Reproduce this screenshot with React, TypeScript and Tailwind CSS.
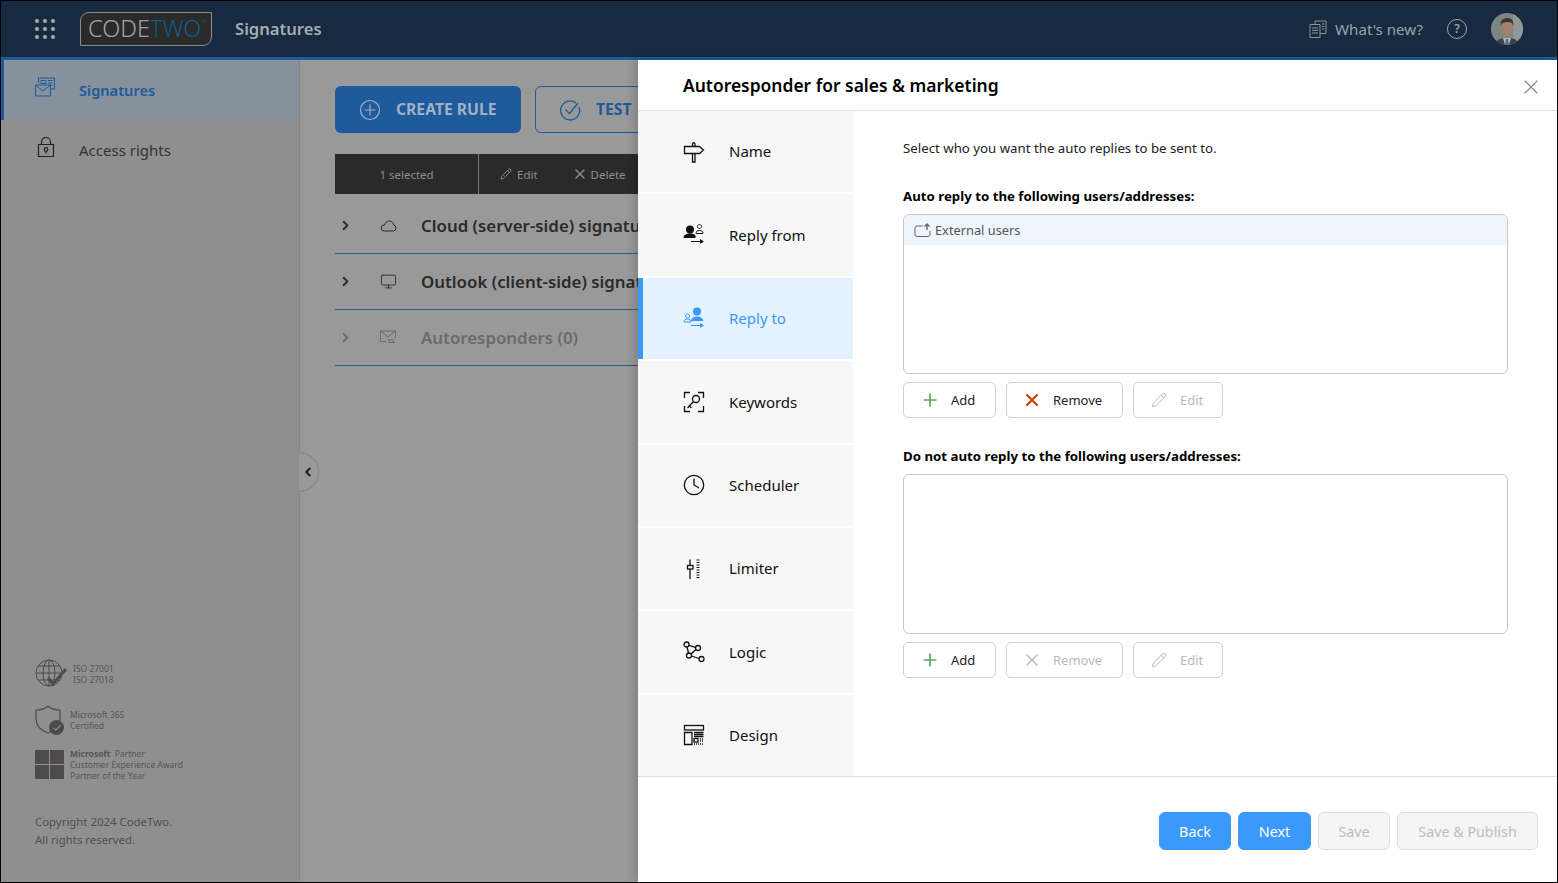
import { Check, ChevronLeft, ChevronRight, Monitor, Pencil, Plus, X } from "lucide-react";
import type { ReactNode } from "react";

const iconProps = { width: 24, height: 24, viewBox: "0 0 24 24", fill: "none", stroke: "currentColor", strokeWidth: 1.3 };

function SignIcon() {
  return (
    <svg {...iconProps}>
      <path d="M2.500 6.500h15l4 3.500-4 3.500h-15z M10.500 6.500V4a1.200 1.200 0 0 1 2.500 0v2.500 M10.500 13.500V22H13v-8.500" />
    </svg>
  );
}

function ReplyFromIcon() {
  return (
    <svg {...iconProps} stroke="none" fill="currentColor">
      <circle cx="8" cy="6.500" r="4" />
      <path d="M1.500 15c0-3 2.500-4.500 6.500-4.500 2.500 0 4.500.6 5.500 2V15z" />
      <path fill="none" stroke="currentColor" strokeWidth="1" d="M17.500 1.500a2 2 0 1 0 .01 0z M14 10.500c0-2 1-3 3.500-3s3.500 1 3.500 3z" />
      <path fill="none" stroke="currentColor" strokeWidth="1" d="M9 18.500h10" />
      <path d="M18 16l4 2.500-4 2.500z" />
    </svg>
  );
}

function ReplyToIcon() {
  return (
    <svg {...iconProps} stroke="none" fill="currentColor">
      <circle cx="15" cy="5.500" r="4" />
      <path d="M9 14.500c.6-2.700 3-4 6-4 3.500 0 6 1.500 6.500 4.500H9z" />
      <path fill="none" stroke="currentColor" strokeWidth="1" d="M5.500 8a2 2 0 1 0 .01 0z M2 16c0-2 1.200-3 3.500-3s3.500 1 3.500 3z" />
      <path fill="none" stroke="currentColor" strokeWidth="1" d="M9 19.500h10" />
      <path d="M18 17l4 2.500-4 2.500z" />
    </svg>
  );
}

function KeywordsIcon() {
  return (
    <svg {...iconProps}>
      <path d="M2.500 8V2.500H8 M16 2.500h5.500V8 M2.500 16v5.500H8 M16 21.500h5.500V16" />
      <circle cx="14" cy="9" r="3.500" />
      <path d="M11.500 11.500L5.500 18 M7.500 16l2 2" />
    </svg>
  );
}

function ClockIcon() {
  return (
    <svg {...iconProps}>
      <circle cx="12" cy="12" r="9.700" />
      <path d="M12 5.500V12l5 3" />
    </svg>
  );
}

function LimiterIcon() {
  return (
    <svg {...iconProps}>
      <path d="M8 2.500v6 M8 12v10" />
      <rect x="5.500" y="8.500" width="5.500" height="3.500" />
      <path d="M14.500 3h3 M14.500 5.500h3 M14.500 8h3 M14.500 10.500h3 M14.500 13h3 M14.500 15.500h3 M14.500 18h3 M14.500 20.500h3" strokeWidth="1" />
    </svg>
  );
}

function LogicIcon() {
  return (
    <svg {...iconProps}>
      <circle cx="4.500" cy="4.500" r="2.500" />
      <circle cx="16" cy="8" r="2.500" />
      <circle cx="7" cy="15.500" r="2.500" />
      <circle cx="19.500" cy="19" r="2.500" />
      <path d="M7 5.300l6.500 2 M5 7l1.500 6 M14 9.500l-5 4.500 M9.500 16l7.500 2.500" />
    </svg>
  );
}

function DesignIcon() {
  return (
    <svg {...iconProps}>
      <rect x="2.500" y="2.500" width="19" height="4.500" />
      <path d="M2.500 9.500h7.500v12H2.500z M12 9.500h9.500 M12 11.500h9.500 M12 13.500h9.500" />
      <rect x="12" y="15.500" width="4" height="3.500" />
      <path d="M18 16h3.500 M18 18h3.500 M12 21h9.500" strokeDasharray="1 1" />
    </svg>
  );
}

const steps: { name: string; icon: ReactNode; active?: boolean }[] = [
  { name: "Name", icon: <SignIcon /> },
  { name: "Reply from", icon: <ReplyFromIcon /> },
  { name: "Reply to", icon: <ReplyToIcon />, active: true },
  { name: "Keywords", icon: <KeywordsIcon /> },
  { name: "Scheduler", icon: <ClockIcon /> },
  { name: "Limiter", icon: <LimiterIcon /> },
  { name: "Logic", icon: <LogicIcon /> },
  { name: "Design", icon: <DesignIcon /> },
];

function GridDots() {
  return (
    <div className="grid grid-cols-3 gap-[4px]">
      {Array.from({ length: 9 }).map((_, i) => (
        <span key={i} className="size-[4px] rounded-full bg-[#a9adb1]" />
      ))}
    </div>
  );
}

function Avatar() {
  return (
    <svg width="32" height="32" viewBox="0 0 32 32">
      <clipPath id="avatar-clip">
        <circle cx="16" cy="16" r="16" />
      </clipPath>
      <g clipPath="url(#avatar-clip)">
        <rect width="32" height="32" fill="#7d8685" />
        <rect x="22" width="10" height="32" fill="#8f9a98" />
        <path d="M4 32c1-6 6-7 12-7s11 1 12 7z" fill="#3f4244" />
        <path d="M12 25h8l-2 7h-4z" fill="#b9b9b9" />
        <path d="M15 26h2l1 6h-4z" fill="#54688a" />
        <ellipse cx="16" cy="15" rx="6" ry="8" fill="#a07f6c" />
        <path d="M9.500 13c-.5-6 3-8 7-8s6.500 3 6 8c-1-3-2-4-6-4s-6 1-7 4z" fill="#43352c" />
      </g>
    </svg>
  );
}

function ToolButton({ label, icon, box, disabled }: { label: string; icon: ReactNode; box: string; disabled?: boolean }) {
  return (
    <button className={`flex h-9 items-center rounded-[5px] border border-[#d0d0d0] bg-white text-[13px] ${box} ${disabled ? "text-[#b9b9b9]" : "text-[#222]"}`}>
      {icon}
      <span className="mt-[2px]">{label}</span>
    </button>
  );
}

function ToolRow({ removable }: { removable?: boolean }) {
  return (
    <div className="mt-2 flex gap-[10px]">
      <ToolButton label="Add" box="w-[93px] gap-[11px] pl-[16px]" icon={<Plus size={20} strokeWidth={2} className="text-[#4caf50]" />} />
      <ToolButton
        label="Remove"
        box="w-[117px] gap-[11px] pl-[15px]"
        disabled={!removable}
        icon={<X size={20} strokeWidth={removable ? 2.500 : 1.800} className={removable ? "text-[#d83b01]" : "text-[#b9b9b9]"} />}
      />
      <ToolButton label="Edit" box="w-[90px] gap-[13px] pl-[17px]" disabled icon={<Pencil size={16} strokeWidth={1.500} className="text-[#b9b9b9]" />} />
    </div>
  );
}

function FooterButton({ label, width, primary }: { label: string; width: string; primary?: boolean }) {
  return (
    <button className={`h-[38px] rounded-[6px] border pt-px text-[14.300px] ${width} ${primary ? "border-[#3b99fc] bg-[#3b99fc] text-white" : "border-[#dedede] bg-[#f5f5f5] text-[#bdbdbd]"}`}>
      {label}
    </button>
  );
}

function ListRow({ label, icon, muted }: { label: string; icon: ReactNode; muted?: boolean }) {
  return (
    <div className={`flex h-14 items-center border-b border-[#2c5a8c] ${muted ? "text-[#6b6b6b]" : "text-[#2a2a2a]"}`}>
      <ChevronRight size={15} strokeWidth={3} className="ml-[3px] w-[15px]" />
      <span className="ml-[26px] flex w-[18px] justify-center">{icon}</span>
      <span className="ml-[24px] whitespace-nowrap text-[16.850px] font-semibold">{label}</span>
    </div>
  );
}

export default function App() {
  return (
    <div className="relative flex h-[883px] w-[1558px] flex-col overflow-hidden border border-black bg-[#999999] font-['Noto_Sans','Open_Sans',sans-serif]">
      <header className="box-content flex h-[56px] items-center border-b-[3px] border-[#1e5a9c] bg-[#172a40]">
        <div className="ml-[34px]">
          <GridDots />
        </div>
        <div className="relative ml-[25px] flex h-[34px] w-[132px] items-center rounded-tl-[9px] rounded-br-[9px] border border-[#8b8b8b] bg-[#2a2a2a] pl-[7px] text-[23.500px] leading-none font-light">
          <span className="text-[#a3a3a3]">CODE</span>
          <span className="text-[#0f5c86]">TWO</span>
          <span className="mb-[14px] text-[6px] text-[#555]">®</span>
        </div>
        <span className="ml-[23px] text-[16.600px] font-semibold text-[#a5adb5]">Signatures</span>
        <div className="ml-auto flex items-center">
          <svg width="18" height="18" viewBox="0 0 18 18" fill="none" stroke="#8c9299" strokeWidth="1">
            <path d="M1 4.500h10v13H1z M6 4.500V1h11v12.500h-6 M3 8h6 M3 10.500h6 M3 13h6 M13 4h2.500 M13 6.500h2.500 M13 9h2.500" />
          </svg>
          <span className="ml-[8px] text-[15.100px] text-[#9aa3ad]">What's new?</span>
          <span className="ml-[24px] flex size-[20px] items-center justify-center rounded-full border border-[#a0a5aa] text-[12px] font-semibold text-[#a0a5aa]">?</span>
          <span className="mr-[34px] ml-[24px] flex">
            <Avatar />
          </span>
        </div>
      </header>

      <div className="flex min-h-0 flex-1">
        <aside className="flex w-[299px] flex-col border-r border-[#858585] bg-[#8f8f8f]">
          <div className="flex h-[60px] items-center border-l-[3px] border-[#1e5a9c] bg-[#87919b] pl-[31px]">
            <svg width="20" height="20" viewBox="0 0 20 20" fill="none" stroke="#1e5a9c" strokeWidth="1" className="mb-[6px]">
              <path d="M3.500 6V1h16v11H16 M6 3.500h5v3H6z M13 3.500h4.500 M13 6h4.500 M14 8.500h3.500 M.5 8h15v11H.5z M.5 8l7.500 6 7.500-6" />
            </svg>
            <span className="ml-[24px] pt-px text-[14.600px] font-semibold text-[#1e5a9c]">Signatures</span>
          </div>
          <div className="flex h-[60px] items-center pl-[36px] text-[#222]">
            <svg width="18" height="21" viewBox="0 0 18 21" fill="none" stroke="currentColor" strokeWidth="1.200" className="mb-[6px]">
              <path d="M1.500 7.500h15v12h-15z M4.500 7.500V5a4.500 4.500 0 0 1 9 0v2.500" />
              <circle cx="9" cy="12.500" r="1.800" />
              <path d="M9 14v2.500" />
            </svg>
            <span className="ml-[24px] text-[15px] text-[#333]">Access rights</span>
          </div>

          <div className="mt-auto pb-[33px] pl-[34px] text-[8.500px] leading-[11px] text-[#555]">
            <div className="flex items-center">
              <svg width="34" height="30" viewBox="0 0 34 30" fill="none" stroke="#4d4b4b" strokeWidth="1">
                <circle cx="14" cy="14" r="13" />
                <ellipse cx="14" cy="14" rx="6" ry="13" />
                <path d="M14 1v26 M1 14h26 M3 7h22 M3 21h22" />
                <path d="M13 19l5 6 13-15" strokeWidth="3" />
              </svg>
              <div className="ml-[4px]">
                <div>ISO 27001</div>
                <div>ISO 27018</div>
              </div>
            </div>
            <div className="mt-[16px] flex items-center">
              <span className="relative block h-[29px] w-[29px]">
                <svg width="26" height="29" viewBox="0 0 26 29" fill="none" stroke="#4d4b4b" strokeWidth="1.200">
                  <path d="M13 1c3 3 7 4 12 4v9c0 6-4 11-12 14C5 25 1 20 1 14V5c5 0 9-1 12-4z" />
                </svg>
                <span className="absolute right-0 bottom-[-1px] flex size-[15px] items-center justify-center rounded-full bg-[#4d4b4b]">
                  <Check size={10} strokeWidth={2.500} className="text-[#999]" />
                </span>
              </span>
              <div className="ml-[6px]">
                <div>Microsoft 365</div>
                <div>Certified</div>
              </div>
            </div>
            <div className="mt-[14px] flex items-center">
              <div className="grid size-[29px] grid-cols-2 gap-px">
                <span className="bg-[#4d4b4b]" />
                <span className="bg-[#4d4b4b]" />
                <span className="bg-[#4d4b4b]" />
                <span className="bg-[#4d4b4b]" />
              </div>
              <div className="ml-[6px]">
                <div>
                  <b>Microsoft</b>&nbsp; Partner
                </div>
                <div>Customer Experience Award</div>
                <div>Partner of the Year</div>
              </div>
            </div>
            <div className="mt-[32px] text-[11.400px] leading-[18px] text-[#4f4f4f]">
              <div>Copyright 2024 CodeTwo.</div>
              <div>All rights reserved.</div>
            </div>
          </div>
        </aside>

        <main className="min-w-0 flex-1 pt-[26px] pl-[35px]">
          <div className="flex gap-[14px]">
            <button className="flex h-[47px] w-[186px] items-center rounded-[6px] bg-[#1e5a9c] pl-[24px] text-[15.700px] font-bold text-[#9fb1c4]">
              <svg width="22" height="22" viewBox="0 0 22 22" fill="none" stroke="currentColor" strokeWidth="1.200">
                <circle cx="11" cy="11" r="9.500" />
                <path d="M11 5.500v11 M5.500 11h11" />
              </svg>
              <span className="ml-[15px] pt-px">CREATE RULE</span>
            </button>
            <button className="flex h-[47px] w-[186px] items-center rounded-[6px] border border-[#1e5a9c] pl-[23px] text-[15.700px] font-bold text-[#1e5a9c]">
              <svg width="22" height="22" viewBox="0 0 22 22" fill="none" stroke="currentColor" strokeWidth="1.300">
                <path d="M20 8a9.500 9.500 0 1 1-3-4" />
                <path d="M6.500 10.500l4 4L19 4" />
              </svg>
              <span className="ml-[15px] pt-px">TEST</span>
            </button>
          </div>
          <div className="mt-[21px] flex h-[40px] items-center bg-[#2a2a2a] text-[11.500px] text-[#8d8d8d]">
            <span className="flex h-full w-[144px] items-center justify-center border-r border-[#777] pt-px">1 selected</span>
            <Pencil size={12} className="ml-[21px]" />
            <span className="ml-[5px] pt-px">Edit</span>
            <X size={16} strokeWidth={2} className="ml-[34px]" />
            <span className="ml-[3px] pt-px">Delete</span>
          </div>
          <div className="pt-[4px]">
            <ListRow
              label="Cloud (server-side) signatures"
              icon={
                <svg width="17" height="12" viewBox="0 0 17 12" fill="none" stroke="currentColor" strokeWidth="1">
                  <path d="M4 11h9.500a3 3 0 0 0 .5-5.800C13 2 11 1 9 1 6.500 1 5 3 4.500 5A3 3 0 0 0 4 11z" />
                </svg>
              }
            />
            <ListRow label="Outlook (client-side) signatures" icon={<Monitor size={17} strokeWidth={1.300} />} />
            <ListRow
              muted
              label="Autoresponders (0)"
              icon={
                <svg width="16" height="15" viewBox="0 0 16 15" fill="none" stroke="currentColor" strokeWidth="1">
                  <path d="M6 11.500H.5V1h15v7 M.5 1L8 7l7.500-6 M8 12.500h6.500l-1.500-1.500 M14 10H8l1.500 1.500" />
                </svg>
              }
            />
          </div>
        </main>
      </div>

      {/* collapse handle */}
      <div className="absolute top-[451px] left-[298px] flex h-[40px] w-[20px] items-center rounded-r-full border border-l-0 border-[#858585] bg-[#999999] pl-[2px]">
        <ChevronLeft size={14} strokeWidth={3.500} className="text-[#222]" />
      </div>

      {/* autoresponder dialog */}
      <section className="absolute top-[59px] right-0 bottom-0 left-[637px] flex flex-col bg-white text-[#111] shadow-[-4px_0_8px_rgba(0,0,0,0.15)]">
        <div className="flex h-[51px] shrink-0 items-center border-b border-[#e0e0e0] pr-[14px] pl-[45px]">
          <h1 className="text-[17.450px] font-semibold text-black">Autoresponder for sales &amp; marketing</h1>
          <X size={24} strokeWidth={1.200} className="mt-[3px] ml-auto text-[#8a8a8a]" />
        </div>

        <div className="flex min-h-0 flex-1">
          <nav className="flex w-[215px] shrink-0 flex-col gap-[2px]">
            {steps.map((s) => (
              <div
                key={s.name}
                className={`flex flex-1 items-center gap-[23px] text-[15px] ${s.active ? "border-l-[5px] border-[#3b99fc] bg-[#e4f1ff] pl-[39px] text-[#3b99fc]" : "bg-[#f7f7f7] pl-[44px] text-[#111]"}`}
              >
                {s.icon}
                <span>{s.name}</span>
              </div>
            ))}
          </nav>

          <div className="flex-1 pt-[27px] pl-[50px] text-[13.250px]">
            <p className="leading-[20px] text-[#222]">Select who you want the auto replies to be sent to.</p>
            <h2 className="mt-[28px] leading-[20px] font-bold text-black">Auto reply to the following users/addresses:</h2>
            <div className="mt-[8px] h-[160px] w-[605px] overflow-hidden rounded-[6px] border border-[#c8c8c8]">
              <div className="flex h-[30px] items-center bg-[#eef5fc] pl-[10px] text-[12.800px] text-[#555]">
                <svg width="18" height="15" viewBox="0 0 18 15" fill="none" stroke="#666" strokeWidth="1" className="mr-[3px]">
                  <path d="M9 3H3a2 2 0 0 0-2 2v6.500a2 2 0 0 0 2 2h11a2 2 0 0 0 2-2V8" />
                  <path d="M13 1v6 M10.500 3.500L13 1l2.500 2.500" strokeWidth="1.400" />
                </svg>
                <span className="pt-px">External users</span>
              </div>
            </div>
            <ToolRow removable />
            <h2 className="mt-[28px] leading-[20px] font-bold text-black">Do not auto reply to the following users/addresses:</h2>
            <div className="mt-[8px] h-[160px] w-[605px] rounded-[6px] border border-[#c8c8c8]" />
            <ToolRow />
          </div>
        </div>

        <footer className="flex h-[106px] shrink-0 items-start justify-end gap-[7px] border-t border-[#e0e0e0] pt-[35px] pr-[19px]">
          <FooterButton primary label="Back" width="w-[72px]" />
          <FooterButton primary label="Next" width="w-[73px]" />
          <FooterButton label="Save" width="w-[72px]" />
          <FooterButton label="Save & Publish" width="w-[141px]" />
        </footer>
      </section>
    </div>
  );
}
